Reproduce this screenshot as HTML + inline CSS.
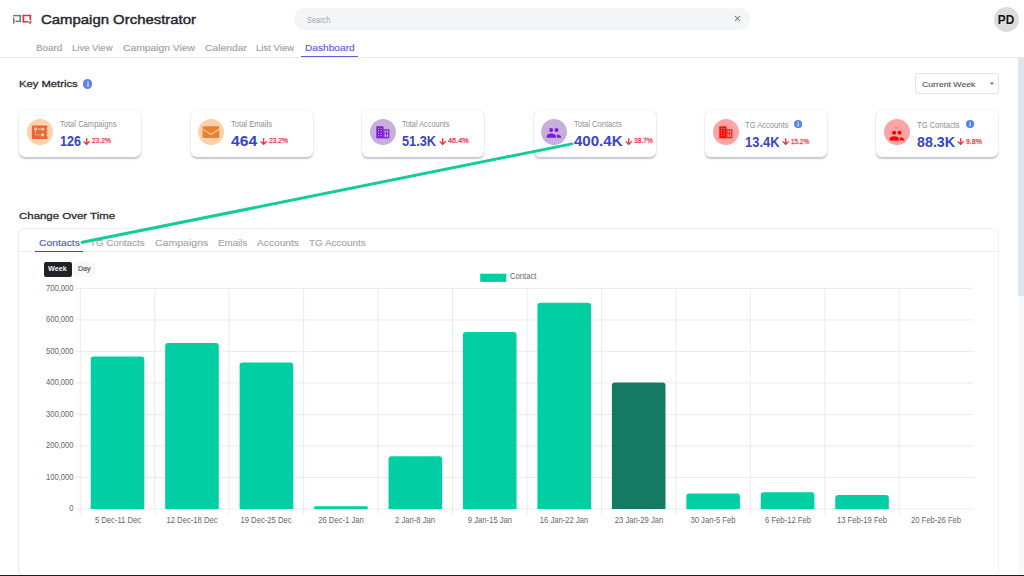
<!DOCTYPE html>
<html><head><meta charset="utf-8">
<style>
html,body{margin:0;padding:0;width:1024px;height:576px;overflow:hidden;background:#fff;}
body{position:relative;font-family:"Liberation Sans",sans-serif;}
.abs{position:absolute;display:block;}
.t{position:absolute;white-space:nowrap;line-height:1;display:inline-block;}
.card{position:absolute;top:109.6px;width:122px;height:47.5px;background:#fff;border-radius:6px;box-shadow:0 0 1.2px 0px rgba(165,170,195,0.3),0 1.6px 1.8px 0px rgba(125,130,165,0.45);}
</style></head>
<body>
<!-- header -->
<svg class="abs" style="left:0;top:0" width="40" height="40" viewBox="0 0 40 40">
 <g fill="#737478">
  <rect x="13" y="14.9" width="8" height="1.45"/>
  <rect x="19.45" y="14.9" width="1.5" height="7.2"/>
  <rect x="15.5" y="20.6" width="5.45" height="1.5"/>
  <rect x="13" y="17.6" width="1.5" height="6"/>
 </g>
 <g fill="#e5353f">
  <rect x="22.5" y="14.7" width="8.6" height="1.65" rx="0.5"/>
  <rect x="22.5" y="14.7" width="1.65" height="7.9" rx="0.5"/>
  <rect x="22.5" y="20.95" width="6.1" height="1.65" rx="0.5"/>
  <rect x="29.45" y="14.7" width="1.65" height="5.5" rx="0.5"/>
  <path d="M29.7,21.2 L32,21.2 L30.5,23.8 L28.9,23.8 Z"/>
 </g>
</svg>
<div class="abs" style="left:293.8px;top:7.8px;width:456.2px;height:22.4px;border-radius:11.2px;background:#f4f5f7;"></div>
<svg class="abs" style="left:733px;top:14.3px" width="9" height="9" viewBox="0 0 9 9"><path d="M2.0,2.0 L7.0,7.0 M7.0,2.0 L2.0,7.0" stroke="#707175" stroke-width="1.05"/></svg>
<div class="abs" style="left:993.6px;top:6.6px;width:25.1px;height:25.1px;border-radius:50%;background:#dcdcdc;"></div>
<div class="abs" style="left:300.7px;top:55.7px;width:57.1px;height:1.9px;background:#5b63dc;"></div>
<div class="abs" style="left:0;top:57.2px;width:1018px;height:0.9px;background:#e9ebee;"></div>
<div class="abs" style="left:1017.7px;top:57.2px;width:6.3px;height:238.4px;background:#dfe5e9;"></div>
<div class="abs" style="left:1017.7px;top:295.6px;width:6.3px;height:280px;background:#f7f8f9;"></div>
<!-- key metrics -->
<div class="abs" style="left:82.7px;top:78.8px;width:9.8px;height:9.8px;border-radius:50%;background:#5b83e9;"></div>
<svg class="abs" style="left:82.7px;top:78.8px" width="10" height="10" viewBox="0 0 10 10"><rect x="4.45" y="2.3" width="1.1" height="1.1" fill="#fff"/><rect x="4.45" y="4.1" width="1.1" height="3.6" fill="#fff"/></svg>
<div class="abs" style="left:915.3px;top:73.2px;width:81.6px;height:18.4px;border:1px solid #e1e5ea;border-radius:3px;background:#fff;"></div>
<svg class="abs" style="left:988px;top:81px" width="8" height="6" viewBox="0 0 8 6"><path d="M1.6,1.4 L6.2,1.4 L3.9,3.9 Z" fill="#77787c"/></svg>
<div class="card" style="left:19.3px;"></div>
<svg class="abs" style="left:26.90px;top:118.70px" width="26" height="26" viewBox="0 0 26 26"><circle cx="13" cy="13" r="12.95" fill="#f9d1ab"/><path d="M5.9,6.6 H20.4 V8.6 A1,1 0 0 0 20.4,10.6 V11.8 A1,1 0 0 0 20.4,13.8 V14.9 A1,1 0 0 0 20.4,16.9 V19.2 Q20.4,20.1 19.5,20.1 H5.9 Q4.9,20.1 4.9,19.2 V7.5 Q4.9,6.6 5.9,6.6 Z" fill="#e8643b"/>
<rect x="7.2" y="8.6" width="2.8" height="2.6" rx="0.3" fill="#f9d1ab"/>
<circle cx="15.9" cy="10.3" r="1.45" fill="#f9d1ab"/><circle cx="15.6" cy="15.9" r="1.6" fill="#f9d1ab"/>
<path d="M10.6,9.5 H13.8 M10.6,10.6 H13.8 M8.5,11.4 V15.9 H13.7" stroke="#f9d1ab" stroke-width="0.55" fill="none"/></svg>
<svg class="abs" style="left:82.90px;top:137.50px" width="8" height="8" viewBox="0 0 8 8"><path d="M3.7,0.2 V6.3 M0.7,3.4 L3.7,6.4 L6.7,3.4" stroke="#ff2233" stroke-width="1.3" fill="none"/></svg>
<div class="card" style="left:190.7px;"></div>
<svg class="abs" style="left:198.30px;top:118.70px" width="26" height="26" viewBox="0 0 26 26"><circle cx="13" cy="13" r="12.95" fill="#f9d1ab"/><rect x="4.6" y="7.3" width="16.6" height="11.7" rx="0.8" fill="#ee7f30"/>
<path d="M4.6,10.2 L12.9,15.4 L21.2,10.2" stroke="#f9d1ab" stroke-width="1.2" fill="none"/></svg>
<svg class="abs" style="left:259.50px;top:137.50px" width="8" height="8" viewBox="0 0 8 8"><path d="M3.7,0.2 V6.3 M0.7,3.4 L3.7,6.4 L6.7,3.4" stroke="#ff2233" stroke-width="1.3" fill="none"/></svg>
<div class="card" style="left:362.1px;"></div>
<svg class="abs" style="left:369.70px;top:118.70px" width="26" height="26" viewBox="0 0 26 26"><circle cx="13" cy="13" r="12.95" fill="#c6afdc"/><rect x="6.3" y="7.3" width="7.2" height="12" fill="#8019d8"/>
<rect x="13.3" y="10.3" width="6.1" height="9" fill="#8019d8"/>
<rect x="14.5" y="11.5" width="3.7" height="6.6" fill="#c6afdc"/>
<rect x="14.5" y="14.2" width="3.7" height="0.8" fill="#8019d8"/><rect x="15.9" y="11.5" width="0.8" height="6.6" fill="#8019d8"/>
<rect x="8.0" y="8.9" width="1.1" height="1.0" fill="#c6afdc"/><rect x="8.0" y="11.3" width="1.1" height="1.0" fill="#c6afdc"/><rect x="8.0" y="13.7" width="1.1" height="1.0" fill="#c6afdc"/><rect x="8.0" y="16.1" width="1.1" height="1.0" fill="#c6afdc"/><rect x="10.6" y="8.9" width="1.1" height="1.0" fill="#c6afdc"/><rect x="10.6" y="11.3" width="1.1" height="1.0" fill="#c6afdc"/><rect x="10.6" y="13.7" width="1.1" height="1.0" fill="#c6afdc"/><rect x="10.6" y="16.1" width="1.1" height="1.0" fill="#c6afdc"/></svg>
<svg class="abs" style="left:438.80px;top:137.50px" width="8" height="8" viewBox="0 0 8 8"><path d="M3.7,0.2 V6.3 M0.7,3.4 L3.7,6.4 L6.7,3.4" stroke="#ff2233" stroke-width="1.3" fill="none"/></svg>
<div class="card" style="left:533.5px;"></div>
<svg class="abs" style="left:541.10px;top:118.70px" width="26" height="26" viewBox="0 0 26 26"><circle cx="13" cy="13" r="12.95" fill="#c6afdc"/><circle cx="10.1" cy="10.9" r="2.0" fill="#7f18d8"/><circle cx="15.5" cy="10.9" r="2.0" fill="#7f18d8"/>
<path d="M5.6,18.7 V17.6 C5.6,15.6 7.6,14.4 10.3,14.4 C13,14.4 15,15.6 15,17.6 V18.7 Z" fill="#7f18d8"/>
<path d="M15.9,18.7 V15.4 C18.4,15.6 20.2,16.6 20.2,18.0 V18.7 Z" fill="#7f18d8"/></svg>
<svg class="abs" style="left:624.70px;top:137.50px" width="8" height="8" viewBox="0 0 8 8"><path d="M3.7,0.2 V6.3 M0.7,3.4 L3.7,6.4 L6.7,3.4" stroke="#ff2233" stroke-width="1.3" fill="none"/></svg>
<div class="card" style="left:704.9px;"></div>
<svg class="abs" style="left:712.50px;top:118.70px" width="26" height="26" viewBox="0 0 26 26"><circle cx="13" cy="13" r="12.95" fill="#ffa4a4"/><rect x="6.3" y="7.3" width="7.2" height="12" fill="#ff0a0a"/>
<rect x="13.3" y="10.3" width="6.1" height="9" fill="#ff0a0a"/>
<rect x="14.5" y="11.5" width="3.7" height="6.6" fill="#ffa4a4"/>
<rect x="14.5" y="14.2" width="3.7" height="0.8" fill="#ff0a0a"/><rect x="15.9" y="11.5" width="0.8" height="6.6" fill="#ff0a0a"/>
<rect x="8.0" y="8.9" width="1.1" height="1.0" fill="#ffa4a4"/><rect x="8.0" y="11.3" width="1.1" height="1.0" fill="#ffa4a4"/><rect x="8.0" y="13.7" width="1.1" height="1.0" fill="#ffa4a4"/><rect x="8.0" y="16.1" width="1.1" height="1.0" fill="#ffa4a4"/><rect x="10.6" y="8.9" width="1.1" height="1.0" fill="#ffa4a4"/><rect x="10.6" y="11.3" width="1.1" height="1.0" fill="#ffa4a4"/><rect x="10.6" y="13.7" width="1.1" height="1.0" fill="#ffa4a4"/><rect x="10.6" y="16.1" width="1.1" height="1.0" fill="#ffa4a4"/></svg>
<svg class="abs" style="left:782.10px;top:138.20px" width="8" height="8" viewBox="0 0 8 8"><path d="M3.7,0.2 V6.3 M0.7,3.4 L3.7,6.4 L6.7,3.4" stroke="#ff2233" stroke-width="1.3" fill="none"/></svg>
<svg class="abs" style="left:793.70px;top:120.40px" width="8.2" height="8.2" viewBox="0 0 10 10"><circle cx="5" cy="5" r="5" fill="#5b83e9"/><rect x="4.4" y="2.2" width="1.2" height="1.2" fill="#fff"/><rect x="4.4" y="4.1" width="1.2" height="3.8" fill="#fff"/></svg>
<div class="card" style="left:876.3px;"></div>
<svg class="abs" style="left:883.90px;top:118.70px" width="26" height="26" viewBox="0 0 26 26"><circle cx="13" cy="13" r="12.95" fill="#ffa4a4"/><circle cx="10.1" cy="13.7" r="2.0" fill="#ff0000"/><circle cx="15.5" cy="13.7" r="2.0" fill="#ff0000"/>
<path d="M5.6,21.5 V20.400000000000002 C5.6,18.4 7.6,17.2 10.3,17.2 C13,17.2 15,18.4 15,20.400000000000002 V21.5 Z" fill="#ff0000"/>
<path d="M15.9,21.5 V18.2 C18.4,18.4 20.2,19.400000000000002 20.2,20.8 V21.5 Z" fill="#ff0000"/><text x="10.8" y="9.6" font-size="3" fill="#ff6b6b" font-family="Liberation Sans">TG</text></svg>
<svg class="abs" style="left:957.10px;top:138.20px" width="8" height="8" viewBox="0 0 8 8"><path d="M3.7,0.2 V6.3 M0.7,3.4 L3.7,6.4 L6.7,3.4" stroke="#ff2233" stroke-width="1.3" fill="none"/></svg>
<svg class="abs" style="left:966.40px;top:120.40px" width="8.2" height="8.2" viewBox="0 0 10 10"><circle cx="5" cy="5" r="5" fill="#5b83e9"/><rect x="4.4" y="2.2" width="1.2" height="1.2" fill="#fff"/><rect x="4.4" y="4.1" width="1.2" height="3.8" fill="#fff"/></svg>
<!-- chart card -->
<div class="abs" style="left:19.1px;top:228.9px;width:979.4px;height:346.4px;border-radius:6px;background:#fff;box-shadow:0 0 0 0.7px #eceef2,-0.3px 0.3px 1.5px rgba(150,155,180,0.3);"></div>
<div class="abs" style="left:19px;top:251.2px;width:980px;height:0.9px;background:#eceef1;"></div>
<div class="abs" style="left:35px;top:250.5px;width:48.1px;height:1.8px;background:#3e47d8;"></div>
<div class="abs" style="left:43.6px;top:261.9px;width:28.1px;height:14.7px;border-radius:2px;background:#1f2227;"></div>
<div class="abs" style="left:73.9px;top:261.9px;width:21.3px;height:14.7px;border-radius:2px;background:#f6f7f8;"></div>
<svg class="abs" style="left:0;top:0" width="1024" height="576" viewBox="0 0 1024 576">
<line x1="74.9" y1="509.00" x2="973.70" y2="509.00" stroke="#e4e4e4" stroke-width="0.75"/>
<line x1="74.9" y1="477.49" x2="973.70" y2="477.49" stroke="#e4e4e4" stroke-width="0.75"/>
<line x1="74.9" y1="445.97" x2="973.70" y2="445.97" stroke="#e4e4e4" stroke-width="0.75"/>
<line x1="74.9" y1="414.46" x2="973.70" y2="414.46" stroke="#e4e4e4" stroke-width="0.75"/>
<line x1="74.9" y1="382.94" x2="973.70" y2="382.94" stroke="#e4e4e4" stroke-width="0.75"/>
<line x1="74.9" y1="351.43" x2="973.70" y2="351.43" stroke="#e4e4e4" stroke-width="0.75"/>
<line x1="74.9" y1="319.91" x2="973.70" y2="319.91" stroke="#e4e4e4" stroke-width="0.75"/>
<line x1="74.9" y1="288.40" x2="973.70" y2="288.40" stroke="#e4e4e4" stroke-width="0.75"/>
<line x1="80.30" y1="288.3" x2="80.30" y2="514.2" stroke="#e4e4e4" stroke-width="0.75"/>
<line x1="154.75" y1="288.3" x2="154.75" y2="514.2" stroke="#e4e4e4" stroke-width="0.75"/>
<line x1="229.20" y1="288.3" x2="229.20" y2="514.2" stroke="#e4e4e4" stroke-width="0.75"/>
<line x1="303.65" y1="288.3" x2="303.65" y2="514.2" stroke="#e4e4e4" stroke-width="0.75"/>
<line x1="378.10" y1="288.3" x2="378.10" y2="514.2" stroke="#e4e4e4" stroke-width="0.75"/>
<line x1="452.55" y1="288.3" x2="452.55" y2="514.2" stroke="#e4e4e4" stroke-width="0.75"/>
<line x1="527.00" y1="288.3" x2="527.00" y2="514.2" stroke="#e4e4e4" stroke-width="0.75"/>
<line x1="601.45" y1="288.3" x2="601.45" y2="514.2" stroke="#e4e4e4" stroke-width="0.75"/>
<line x1="675.90" y1="288.3" x2="675.90" y2="514.2" stroke="#e4e4e4" stroke-width="0.75"/>
<line x1="750.35" y1="288.3" x2="750.35" y2="514.2" stroke="#e4e4e4" stroke-width="0.75"/>
<line x1="824.80" y1="288.3" x2="824.80" y2="514.2" stroke="#e4e4e4" stroke-width="0.75"/>
<line x1="899.25" y1="288.3" x2="899.25" y2="514.2" stroke="#e4e4e4" stroke-width="0.75"/>
<path d="M90.73,509.0 L90.73,359.50 Q90.73,356.50 93.73,356.50 L141.33,356.50 Q144.33,356.50 144.33,359.50 L144.33,509.0 Z" fill="#02cea3"/>
<path d="M165.18,509.0 L165.18,346.00 Q165.18,343.00 168.18,343.00 L215.78,343.00 Q218.78,343.00 218.78,346.00 L218.78,509.0 Z" fill="#02cea3"/>
<path d="M239.62,509.0 L239.62,365.60 Q239.62,362.60 242.62,362.60 L290.23,362.60 Q293.23,362.60 293.23,365.60 L293.23,509.0 Z" fill="#02cea3"/>
<path d="M314.07,509.0 L314.07,507.62 Q314.07,506.25 315.45,506.25 L366.30,506.25 Q367.68,506.25 367.68,507.62 L367.68,509.0 Z" fill="#02cea3"/>
<path d="M388.53,509.0 L388.53,459.20 Q388.53,456.20 391.53,456.20 L439.13,456.20 Q442.13,456.20 442.13,459.20 L442.13,509.0 Z" fill="#02cea3"/>
<path d="M462.98,509.0 L462.98,335.00 Q462.98,332.00 465.98,332.00 L513.58,332.00 Q516.58,332.00 516.58,335.00 L516.58,509.0 Z" fill="#02cea3"/>
<path d="M537.43,509.0 L537.43,305.80 Q537.43,302.80 540.43,302.80 L588.02,302.80 Q591.02,302.80 591.02,305.80 L591.02,509.0 Z" fill="#02cea3"/>
<path d="M611.88,509.0 L611.88,385.50 Q611.88,382.50 614.88,382.50 L662.47,382.50 Q665.47,382.50 665.47,385.50 L665.47,509.0 Z" fill="#147a62"/>
<path d="M686.33,509.0 L686.33,496.60 Q686.33,493.60 689.33,493.60 L736.92,493.60 Q739.92,493.60 739.92,496.60 L739.92,509.0 Z" fill="#02cea3"/>
<path d="M760.77,509.0 L760.77,495.20 Q760.77,492.20 763.77,492.20 L811.37,492.20 Q814.37,492.20 814.37,495.20 L814.37,509.0 Z" fill="#02cea3"/>
<path d="M835.23,509.0 L835.23,498.10 Q835.23,495.10 838.23,495.10 L885.82,495.10 Q888.82,495.10 888.82,498.10 L888.82,509.0 Z" fill="#02cea3"/>
<rect x="480.2" y="273.7" width="26.1" height="8.2" fill="#02cea3"/>
</svg>
<span id="t0" class="t" style="left:40.50px;top:13.00px;font-size:13.0px;font-weight:400;color:#25272e;transform:scaleX(1.1471);transform-origin:left;-webkit-text-stroke:0.42px #25272e;">Campaign Orchestrator</span>
<span id="t1" class="t" style="left:306.70px;top:15.87px;font-size:8.3px;font-weight:400;color:#a4a6a9;transform:scaleX(0.8898);transform-origin:left;">Search</span>
<span id="t2" class="t" style="left:1006.10px;top:13.70px;font-size:12.4px;font-weight:700;color:#101010;transform:translateX(-50%) scaleX(0.9525);transform-origin:center;">PD</span>
<span id="t3" class="t" style="left:35.50px;top:44.01px;font-size:9.2px;font-weight:400;color:#9da1a8;transform:scaleX(1.0721);transform-origin:left;-webkit-text-stroke:0.15px #9da1a8;">Board</span>
<span id="t4" class="t" style="left:71.80px;top:44.01px;font-size:9.2px;font-weight:400;color:#9da1a8;transform:scaleX(1.0343);transform-origin:left;-webkit-text-stroke:0.15px #9da1a8;">Live View</span>
<span id="t5" class="t" style="left:122.50px;top:44.01px;font-size:9.2px;font-weight:400;color:#9da1a8;transform:scaleX(1.1217);transform-origin:left;-webkit-text-stroke:0.15px #9da1a8;">Campaign View</span>
<span id="t6" class="t" style="left:204.60px;top:44.01px;font-size:9.2px;font-weight:400;color:#9da1a8;transform:scaleX(1.1261);transform-origin:left;-webkit-text-stroke:0.15px #9da1a8;">Calendar</span>
<span id="t7" class="t" style="left:256.40px;top:44.01px;font-size:9.2px;font-weight:400;color:#9da1a8;transform:scaleX(1.0434);transform-origin:left;-webkit-text-stroke:0.15px #9da1a8;">List View</span>
<span id="t8" class="t" style="left:304.60px;top:44.01px;font-size:9.2px;font-weight:400;color:#5a62d8;transform:scaleX(1.1056);transform-origin:left;-webkit-text-stroke:0.15px #5a62d8;">Dashboard</span>
<span id="t9" class="t" style="left:19.30px;top:79.34px;font-size:9.4px;font-weight:400;color:#2a2c33;transform:scaleX(1.1967);transform-origin:left;-webkit-text-stroke:0.3px #2a2c33;">Key Metrics</span>
<span id="t10" class="t" style="left:922.40px;top:80.63px;font-size:8.0px;font-weight:400;color:#505257;transform:scaleX(1.0853);transform-origin:left;-webkit-text-stroke:0.12px #505257;">Current Week</span>
<span id="t11" class="t" style="left:59.50px;top:121.26px;font-size:8.2px;font-weight:400;color:#8b8f96;transform:scaleX(0.9265);transform-origin:left;">Total Campaigns</span>
<span id="t12" class="t" style="left:59.50px;top:134.15px;font-size:14.0px;font-weight:700;color:#3b44c8;transform:scaleX(0.8947);transform-origin:left;">126</span>
<span id="t13" class="t" style="left:92.20px;top:136.81px;font-size:7.2px;font-weight:400;color:#ff3a4c;transform:scaleX(0.9269);transform-origin:left;-webkit-text-stroke:0.28px #ff3a4c;">23.2%</span>
<span id="t14" class="t" style="left:230.90px;top:121.26px;font-size:8.2px;font-weight:400;color:#8b8f96;transform:scaleX(0.9288);transform-origin:left;">Total Emails</span>
<span id="t15" class="t" style="left:230.90px;top:134.15px;font-size:14.0px;font-weight:700;color:#3b44c8;transform:scaleX(1.1173);transform-origin:left;">464</span>
<span id="t16" class="t" style="left:268.80px;top:136.81px;font-size:7.2px;font-weight:400;color:#ff3a4c;transform:scaleX(0.9367);transform-origin:left;-webkit-text-stroke:0.28px #ff3a4c;">23.2%</span>
<span id="t17" class="t" style="left:402.30px;top:121.26px;font-size:8.2px;font-weight:400;color:#8b8f96;transform:scaleX(0.8997);transform-origin:left;">Total Accounts</span>
<span id="t18" class="t" style="left:402.30px;top:134.15px;font-size:14.0px;font-weight:700;color:#3b44c8;transform:scaleX(0.9101);transform-origin:left;">51.3K</span>
<span id="t19" class="t" style="left:448.10px;top:136.81px;font-size:7.2px;font-weight:400;color:#ff3a4c;transform:scaleX(1.0152);transform-origin:left;-webkit-text-stroke:0.28px #ff3a4c;">46.4%</span>
<span id="t20" class="t" style="left:573.70px;top:121.26px;font-size:8.2px;font-weight:400;color:#8b8f96;transform:scaleX(0.9231);transform-origin:left;">Total Contacts</span>
<span id="t21" class="t" style="left:573.70px;top:134.15px;font-size:14.0px;font-weight:700;color:#3b44c8;transform:scaleX(1.0740);transform-origin:left;">400.4K</span>
<span id="t22" class="t" style="left:634.00px;top:136.81px;font-size:7.2px;font-weight:400;color:#ff3a4c;transform:scaleX(0.9269);transform-origin:left;-webkit-text-stroke:0.28px #ff3a4c;">38.7%</span>
<span id="t23" class="t" style="left:745.10px;top:121.96px;font-size:8.2px;font-weight:400;color:#8b8f96;transform:scaleX(0.9259);transform-origin:left;">TG Accounts</span>
<span id="t24" class="t" style="left:745.10px;top:134.85px;font-size:14.0px;font-weight:700;color:#3b44c8;transform:scaleX(0.9235);transform-origin:left;">13.4K</span>
<span id="t25" class="t" style="left:791.40px;top:137.51px;font-size:7.2px;font-weight:400;color:#ff3a4c;transform:scaleX(0.8877);transform-origin:left;-webkit-text-stroke:0.28px #ff3a4c;">15.2%</span>
<span id="t26" class="t" style="left:916.50px;top:121.96px;font-size:8.2px;font-weight:400;color:#8b8f96;transform:scaleX(0.9267);transform-origin:left;">TG Contacts</span>
<span id="t27" class="t" style="left:916.50px;top:134.85px;font-size:14.0px;font-weight:700;color:#3b44c8;transform:scaleX(1.0198);transform-origin:left;">88.3K</span>
<span id="t28" class="t" style="left:966.40px;top:137.51px;font-size:7.2px;font-weight:400;color:#ff3a4c;transform:scaleX(0.9640);transform-origin:left;-webkit-text-stroke:0.28px #ff3a4c;">9.8%</span>
<span id="t29" class="t" style="left:19.30px;top:211.10px;font-size:9.8px;font-weight:400;color:#2a2c33;transform:scaleX(1.1686);transform-origin:left;-webkit-text-stroke:0.3px #2a2c33;">Change Over Time</span>
<span id="t30" class="t" style="left:38.60px;top:237.70px;font-size:9.8px;font-weight:400;color:#5059d6;transform:scaleX(1.0576);transform-origin:left;-webkit-text-stroke:0.15px #5059d6;">Contacts</span>
<span id="t31" class="t" style="left:90.30px;top:237.70px;font-size:9.8px;font-weight:400;color:#a2a6ad;transform:scaleX(0.9945);transform-origin:left;-webkit-text-stroke:0.15px #a2a6ad;">TG Contacts</span>
<span id="t32" class="t" style="left:154.70px;top:237.70px;font-size:9.8px;font-weight:400;color:#a2a6ad;transform:scaleX(1.0754);transform-origin:left;-webkit-text-stroke:0.15px #a2a6ad;">Campaigns</span>
<span id="t33" class="t" style="left:217.70px;top:237.70px;font-size:9.8px;font-weight:400;color:#a2a6ad;transform:scaleX(0.9964);transform-origin:left;-webkit-text-stroke:0.15px #a2a6ad;">Emails</span>
<span id="t34" class="t" style="left:257.30px;top:237.70px;font-size:9.8px;font-weight:400;color:#a2a6ad;transform:scaleX(1.0394);transform-origin:left;-webkit-text-stroke:0.15px #a2a6ad;">Accounts</span>
<span id="t35" class="t" style="left:309.10px;top:237.70px;font-size:9.8px;font-weight:400;color:#a2a6ad;transform:scaleX(1.0090);transform-origin:left;-webkit-text-stroke:0.15px #a2a6ad;">TG Accounts</span>
<span id="t36" class="t" style="left:48.30px;top:266.10px;font-size:6.5px;font-weight:700;color:#f4f4f4;transform:scaleX(1.1141);transform-origin:left;">Week</span>
<span id="t37" class="t" style="left:78.00px;top:266.01px;font-size:6.6px;font-weight:400;color:#5d5f63;transform:scaleX(1.0652);transform-origin:left;-webkit-text-stroke:0.2px #5d5f63;">Day</span>
<span id="t38" class="t" style="left:510.20px;top:273.26px;font-size:8.2px;font-weight:400;color:#666666;transform:scaleX(0.9355);transform-origin:left;">Contact</span>
<span id="t39" class="t" style="right:950.90px;top:505.46px;font-size:8.2px;font-weight:400;color:#666666;transform:scaleX(0.9350);transform-origin:right;">0</span>
<span id="t40" class="t" style="right:950.90px;top:473.94px;font-size:8.2px;font-weight:400;color:#666666;transform:scaleX(0.9350);transform-origin:right;">100,000</span>
<span id="t41" class="t" style="right:950.90px;top:442.43px;font-size:8.2px;font-weight:400;color:#666666;transform:scaleX(0.9350);transform-origin:right;">200,000</span>
<span id="t42" class="t" style="right:950.90px;top:410.92px;font-size:8.2px;font-weight:400;color:#666666;transform:scaleX(0.9350);transform-origin:right;">300,000</span>
<span id="t43" class="t" style="right:950.90px;top:379.40px;font-size:8.2px;font-weight:400;color:#666666;transform:scaleX(0.9350);transform-origin:right;">400,000</span>
<span id="t44" class="t" style="right:950.90px;top:347.89px;font-size:8.2px;font-weight:400;color:#666666;transform:scaleX(0.9350);transform-origin:right;">500,000</span>
<span id="t45" class="t" style="right:950.90px;top:316.37px;font-size:8.2px;font-weight:400;color:#666666;transform:scaleX(0.9350);transform-origin:right;">600,000</span>
<span id="t46" class="t" style="right:950.90px;top:284.86px;font-size:8.2px;font-weight:400;color:#666666;transform:scaleX(0.9350);transform-origin:right;">700,000</span>
<span id="t47" class="t" style="left:117.53px;top:516.96px;font-size:8.2px;font-weight:400;color:#666666;transform:translateX(-50%) scaleX(0.9350);transform-origin:center;">5 Dec-11 Dec</span>
<span id="t48" class="t" style="left:191.98px;top:516.96px;font-size:8.2px;font-weight:400;color:#666666;transform:translateX(-50%) scaleX(0.9350);transform-origin:center;">12 Dec-18 Dec</span>
<span id="t49" class="t" style="left:266.43px;top:516.96px;font-size:8.2px;font-weight:400;color:#666666;transform:translateX(-50%) scaleX(0.9350);transform-origin:center;">19 Dec-25 Dec</span>
<span id="t50" class="t" style="left:340.88px;top:516.96px;font-size:8.2px;font-weight:400;color:#666666;transform:translateX(-50%) scaleX(0.9350);transform-origin:center;">26 Dec-1 Jan</span>
<span id="t51" class="t" style="left:415.33px;top:516.96px;font-size:8.2px;font-weight:400;color:#666666;transform:translateX(-50%) scaleX(0.9350);transform-origin:center;">2 Jan-8 Jan</span>
<span id="t52" class="t" style="left:489.78px;top:516.96px;font-size:8.2px;font-weight:400;color:#666666;transform:translateX(-50%) scaleX(0.9350);transform-origin:center;">9 Jan-15 Jan</span>
<span id="t53" class="t" style="left:564.23px;top:516.96px;font-size:8.2px;font-weight:400;color:#666666;transform:translateX(-50%) scaleX(0.9350);transform-origin:center;">16 Jan-22 Jan</span>
<span id="t54" class="t" style="left:638.67px;top:516.96px;font-size:8.2px;font-weight:400;color:#666666;transform:translateX(-50%) scaleX(0.9350);transform-origin:center;">23 Jan-29 Jan</span>
<span id="t55" class="t" style="left:713.12px;top:516.96px;font-size:8.2px;font-weight:400;color:#666666;transform:translateX(-50%) scaleX(0.9350);transform-origin:center;">30 Jan-5 Feb</span>
<span id="t56" class="t" style="left:787.57px;top:516.96px;font-size:8.2px;font-weight:400;color:#666666;transform:translateX(-50%) scaleX(0.9350);transform-origin:center;">6 Feb-12 Feb</span>
<span id="t57" class="t" style="left:862.02px;top:516.96px;font-size:8.2px;font-weight:400;color:#666666;transform:translateX(-50%) scaleX(0.9350);transform-origin:center;">13 Feb-19 Feb</span>
<span id="t58" class="t" style="left:936.48px;top:516.96px;font-size:8.2px;font-weight:400;color:#666666;transform:translateX(-50%) scaleX(0.9350);transform-origin:center;">20 Feb-26 Feb</span>
<div class="abs" style="left:0;top:574.6px;width:1024px;height:1.4px;background:#1e1f21;"></div>
<svg class="abs" style="left:0;top:0" width="1024" height="576" viewBox="0 0 1024 576"><line x1="82.3" y1="242.3" x2="571.9" y2="143.9" stroke="#14cb9a" stroke-width="3" stroke-linecap="round"/></svg>
</body></html>
